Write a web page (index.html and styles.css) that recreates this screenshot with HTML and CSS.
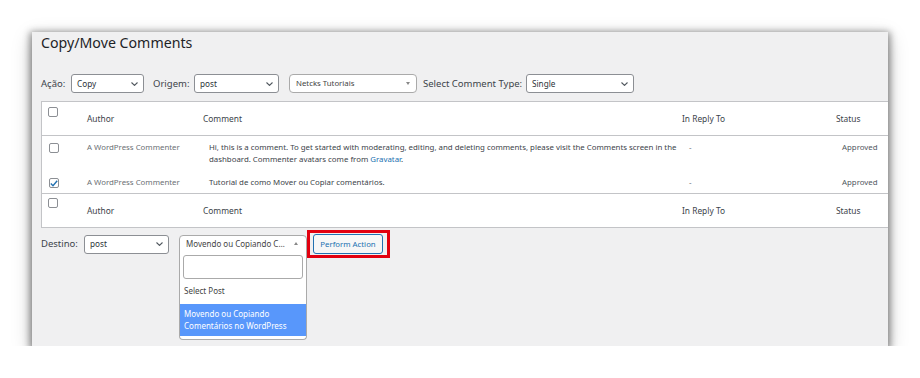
FILE: index.html
```html
<!DOCTYPE html>
<html lang="pt">
<head>
<meta charset="utf-8">
<title>Copy/Move Comments</title>
<link rel="stylesheet" href="styles.css">
</head>
<body>
<div class="page">
  <div class="panel">
    <h1 class="title">Copy/Move Comments</h1>

    <div class="controls">
      <span class="lbl w-acao">Ação:</span>
      <div class="wp-select w-copy">
        <span>Copy</span>
        <svg class="chev" width="7" height="4" viewBox="0 0 7 4"><path d="M0.5 0.5 L3.5 3.4 L6.5 0.5" fill="none" stroke="#50575e" stroke-width="1.1"/></svg>
      </div>
      <span class="lbl w-origem">Origem:</span>
      <div class="wp-select w-post">
        <span>post</span>
        <svg class="chev" width="7" height="4" viewBox="0 0 7 4"><path d="M0.5 0.5 L3.5 3.4 L6.5 0.5" fill="none" stroke="#50575e" stroke-width="1.1"/></svg>
      </div>
      <div class="s2 w-s2 mr6">
        <span class="s2-text">Netcks Tutoriais</span>
        <span class="tri-down"></span>
      </div>
      <span class="lbl w-type">Select Comment Type:</span>
      <div class="wp-select w-single">
        <span>Single</span>
        <svg class="chev" width="7" height="4" viewBox="0 0 7 4"><path d="M0.5 0.5 L3.5 3.4 L6.5 0.5" fill="none" stroke="#50575e" stroke-width="1.1"/></svg>
      </div>
    </div>

    <div class="table">
      <div class="row head">
        <div class="cell cb-cell"><span class="cb"></span></div>
        <div class="cell">Author</div>
        <div class="cell">Comment</div>
        <div class="cell">In Reply To</div>
        <div class="cell">Status</div>
      </div>
      <div class="row body r1">
        <div class="cell cb-cell"><span class="cb"></span></div>
        <div class="cell author">A WordPress Commenter</div>
        <div class="cell text">Hi, this is a comment. To get started with moderating, editing, and deleting comments, please visit the Comments screen in the dashboard. Commenter avatars come from <a class="link" href="#">Gravatar</a>.</div>
        <div class="cell reply">-</div>
        <div class="cell status">Approved</div>
      </div>
      <div class="row body r2">
        <div class="cell cb-cell"><span class="cb checked"><svg width="8" height="7" viewBox="0 0 8 7"><path d="M0.8 3.6 L3 5.8 L7.2 0.8" fill="none" stroke="#2271b1" stroke-width="1.4"/></svg></span></div>
        <div class="cell author">A WordPress Commenter</div>
        <div class="cell text">Tutorial de como Mover ou Copiar comentários.</div>
        <div class="cell reply">-</div>
        <div class="cell status">Approved</div>
      </div>
      <div class="row foot">
        <div class="cell cb-cell"><span class="cb"></span></div>
        <div class="cell">Author</div>
        <div class="cell">Comment</div>
        <div class="cell">In Reply To</div>
        <div class="cell">Status</div>
      </div>
    </div>

    <div class="dest">
      <span class="lbl w-destino">Destino:</span>
      <div class="wp-select w-post2">
        <span>post</span>
        <svg class="chev" width="7" height="4" viewBox="0 0 7 4"><path d="M0.5 0.5 L3.5 3.4 L6.5 0.5" fill="none" stroke="#50575e" stroke-width="1.1"/></svg>
      </div>
      <div class="s2 s2-open w-s2b">
        <span class="s2-text">Movendo ou Copiando Comentários no WordPress</span>
        <span class="tri-up"></span>
        <div class="dropdown">
          <div class="search"></div>
          <div class="opt">Select Post</div>
          <div class="opt hl">Movendo ou Copiando Comentários no WordPress</div>
        </div>
      </div>
      <div class="highlight">
        <button class="btn" type="button">Perform Action</button>
      </div>
    </div>
  </div>
</div>
</body>
</html>
```

FILE: styles.css
```css
html, body {
  margin: 0;
  padding: 0;
  background: #ffffff;
}

body {
  font-family: "Noto Sans", "Open Sans", sans-serif;
  color: #3c434a;
}

.page {
  padding: 32px 0 0 32px;
}

.panel {
  width: 856px;
  height: 314px;
  box-sizing: border-box;
  padding: 1px 0 0 9px;
  background: #f0f0f1;
  overflow: hidden;
  box-shadow: 0 2px 7px 2px rgba(0, 0, 0, 0.42), 0 6px 18px rgba(0, 0, 0, 0.25);
}

.title {
  margin: 0;
  font-weight: 400;
  font-size: 14.2px;
  line-height: 20px;
  color: #1d2327;
}

.controls {
  display: flex;
  align-items: center;
  height: 19px;
  margin-top: 21px;
}

.lbl {
  flex: none;
  font-size: 9.5px;
  line-height: 12px;
  color: #3c434a;
  white-space: nowrap;
}

.w-acao { width: 30px; }
.w-origem { width: 41px; }
.w-type { width: 103px; }
.w-destino { width: 43px; }

.wp-select {
  flex: none;
  height: 19px;
  box-sizing: border-box;
  border: 1px solid #8c8f94;
  border-radius: 3px;
  background: #ffffff;
  display: flex;
  align-items: center;
  justify-content: space-between;
  padding: 0 5px 1px 5px;
  font-size: 8.2px;
  color: #2c3338;
}

.chev {
  flex: none;
  margin-top: 1px;
}

.w-copy { width: 73px; margin-right: 9px; }
.w-post { width: 85px; margin-right: 10px; }
.w-single { width: 108px; }
.w-post2 { width: 85px; margin-right: 10px; }

.s2 {
  flex: none;
  position: relative;
  height: 19px;
  box-sizing: border-box;
  border: 1px solid #aaaaaa;
  border-radius: 4px;
  background: #ffffff;
  display: flex;
  align-items: center;
  padding: 0 6px 1px 6px;
  font-size: 7.8px;
  color: #444444;
}

.s2-text {
  flex: 1;
  min-width: 0;
  white-space: nowrap;
  overflow: hidden;
  text-overflow: ellipsis;
}

.w-s2 { width: 128px; }
.mr6 { margin-right: 6px; }

.w-s2b {
  width: 128px;
  height: 18px;
  padding-right: 11px;
  font-size: 8px;
}

.s2-open {
  border-radius: 4px 4px 0 0;
}

.tri-down {
  flex: none;
  width: 0;
  height: 0;
  border-left: 2.5px solid transparent;
  border-right: 2.5px solid transparent;
  border-top: 3px solid #888888;
}

.tri-up {
  flex: none;
  width: 0;
  height: 0;
  border-left: 2.5px solid transparent;
  border-right: 2.5px solid transparent;
  border-bottom: 3px solid #888888;
  margin-left: 6px;
  margin-right: -3px;
}

.table {
  margin-top: 8px;
  background: #ffffff;
  border: 1px solid #c3c4c7;
  border-right: none;
  font-size: 7.85px;
  line-height: 12px;
  color: #2c3338;
}

.row {
  display: grid;
  grid-template-columns: 45px 116px 479px 154px 1fr;
}

.head,
.foot {
  height: 33px;
  align-items: center;
  font-size: 8.4px;
  color: #3c434a;
}

.head {
  border-bottom: 1px solid #c3c4c7;
}

.foot {
  border-top: 1px solid #c3c4c7;
}

.head .cb-cell {
  align-self: start;
  padding-top: 5px;
}

.foot .cb-cell {
  align-self: start;
  padding-top: 4px;
}

.cb-cell {
  padding-left: 6px;
}

.cb {
  display: flex;
  align-items: center;
  justify-content: center;
  width: 10px;
  height: 10px;
  box-sizing: border-box;
  border: 1px solid #8c8f94;
  border-radius: 2px;
  background: #ffffff;
}

.body {
  align-items: start;
  padding-top: 5px;
}

.r1 { height: 30px; }
.r2 { height: 17px; }

.body .cb-cell {
  padding-top: 2px;
  padding-left: 7px;
}

.author {
  color: #6b7075;
}

.text {
  padding-left: 6px;
  padding-right: 2px;
  color: #3c434a;
}

.reply {
  padding-left: 7px;
  color: #646970;
}

.status {
  padding-left: 6px;
  color: #50575e;
}

.link {
  color: #2271b1;
  text-decoration: none;
}

.dest {
  display: flex;
  align-items: center;
  height: 28px;
  margin-top: 2px;
}

.dropdown {
  position: absolute;
  top: 100%;
  left: -1px;
  width: 128px;
  box-sizing: border-box;
  border: 1px solid #aaaaaa;
  border-top: none;
  border-radius: 0 0 4px 4px;
  background: #ffffff;
  padding: 3px 0 3px 0;
  font-size: 8px;
  line-height: 12px;
  color: #444444;
  z-index: 2;
}

.search {
  height: 24px;
  box-sizing: border-box;
  margin: 0 3px 0 3px;
  border: 1px solid #aaaaaa;
  border-radius: 3px;
  background: #ffffff;
}

.opt {
  padding: 6px 4px 7px 4px;
  white-space: normal;
}

.opt.hl {
  padding: 4px 4px 4px 4px;
  background: #5897fb;
  color: #ffffff;
}

.highlight {
  flex: none;
  border: 3px solid #e2000f;
  padding: 1px 4px 1px 3px;
  display: flex;
}

.btn {
  width: 70px;
  height: 20px;
  box-sizing: border-box;
  margin: 0;
  padding: 0 0 1px 0;
  border: 1px solid #2271b1;
  border-radius: 3px;
  background: #f6f7f7;
  color: #2271b1;
  font-family: "Noto Sans", "Open Sans", sans-serif;
  font-size: 7.8px;
  line-height: 12px;
  cursor: pointer;
}
```
